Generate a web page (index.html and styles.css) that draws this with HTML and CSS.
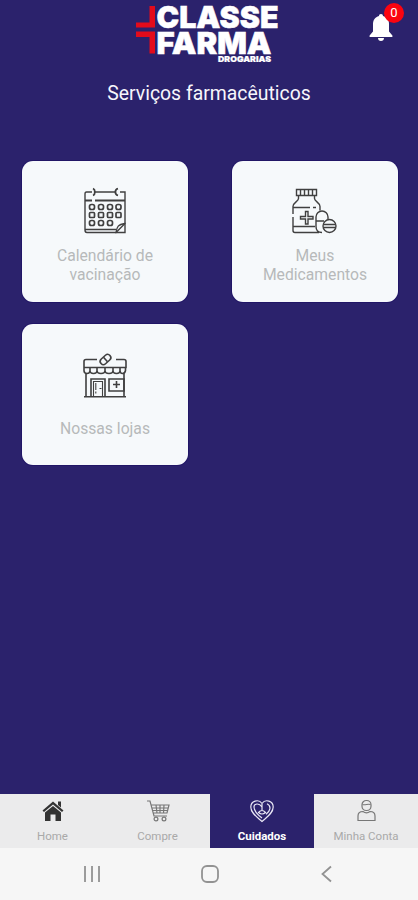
FILE: index.html
```html
<!DOCTYPE html>
<html lang="pt-BR">
<head>
<meta charset="utf-8">
<meta name="viewport" content="width=device-width, initial-scale=1">
<title>Classe Farma</title>
<link rel="stylesheet" href="styles.css">
</head>
<body>
<div class="app">
  <header class="header">
    <svg class="logo" viewBox="0 0 146 66" role="img">
      <path class="logo-cross" d="M13.500 6h5.500v21.500H0v-5h13.500zM0 31.500h19v22h-5.500v-16.500H0z"/>
      <g class="logo-name">
        <text x="20.500" y="28.200" font-size="30" textLength="122" lengthAdjust="spacingAndGlyphs">CLASSE</text>
        <text x="20.500" y="53.500" font-size="29.500" textLength="115" lengthAdjust="spacingAndGlyphs">FARMA</text>
        <text class="logo-sub" x="82" y="61.700" font-size="8.200" textLength="53" lengthAdjust="spacingAndGlyphs">DROGARIAS</text>
      </g>
    </svg>
    <div class="bell">
      <svg width="24" height="28" viewBox="0 0 24 28"><path d="M12 0c-1.300 0-2 .8-2 2-4 1-6 4.200-6 8v7.500L.6 21.500V23h22.800v-1.500L20 17.500V10c0-3.800-2-7-6-8 0-1.200-.7-2-2-2zM9 24h6c0 1.800-1.200 3-3 3s-3-1.200-3-3z"/></svg>
      <span class="badge">0</span>
    </div>
  </header>
  <h1 class="title">Serviços farmacêuticos</h1>
  <main class="cards">
    <a class="card">
      <svg class="card-icon" viewBox="0 0 48 48">
        <path d="M11 6H5.500Q4 6 4 8v36q0 2.500 2 2.500h29l9-9V6h-5M14 6h20M4 43.500h31"/>
        <path class="bold" d="M4 14.500h7m3 0h30M12 9.500c2.500-1 2.500-6 0-7M37 9.500c-3.500-1-3.500-6 0-7"/>
        <path d="M35 46.500c1-6 2-8 9-9v9z"/>
        <g class="dates">
          <rect x="8.500" y="18.500" width="5" height="5" rx="2"/><rect x="17.500" y="18.500" width="5" height="5" rx="2"/><rect x="26.500" y="18.500" width="5" height="5" rx="2"/><rect x="35" y="18.500" width="5" height="5" rx="2"/>
          <rect x="8.500" y="26.500" width="5" height="5" rx="1"/><rect x="17.500" y="26.500" width="5" height="5" rx="1"/><rect x="26.500" y="26.500" width="5" height="5" rx="1"/><rect x="35" y="26.500" width="5" height="5" rx="1"/>
          <rect x="8.500" y="34.500" width="5" height="5" rx="2"/><rect x="17.500" y="34.500" width="5" height="5" rx="2"/><rect x="26.500" y="34.500" width="5" height="5" rx="2"/>
        </g>
      </svg>
      <span class="card-label">Calendário de<br>vacinação</span>
    </a>
    <a class="card">
      <svg class="card-icon" viewBox="0 0 48 48">
        <path d="M5.500 3.500h20v6h-20zM9.500 4v5M13.500 4v5M17.500 4v5M21.500 4v5M7.500 9.500v3c0 3-5.500 4-5.500 8V28m0 3v13.500q0 2 2 2h24M23.500 9.500v3c0 3 5.500 4 5.500 8v4M2 21.500h17m3 0h3M2 40.500h22"/>
        <path d="M14.500 25.500h2.500v5h5v2.500h-5v5h-2.500v-5h-5v-2.500h5z"/>
        <path d="M31 46.500c-4 0-6-2-6-6V31a6 6 0 0 1 12 0v2.500M25 35h8"/>
        <circle cx="38.500" cy="40" r="6.500"/>
        <path d="M32.500 38.500h12M32.500 41.500h12"/>
      </svg>
      <span class="card-label">Meus<br>Medicamentos</span>
    </a>
    <a class="card">
      <svg class="card-icon store" viewBox="0 0 48 48">
        <path d="M16 8.500H5Q3 8.500 3 10.500v6h42v-6q0-2-2-2h-8M3 16.500v3q0 3 3 3t3-3v-3 3q0 3 3.500 3t3.500-3v-3 3q0 3 4 3t4-3v-3 3q0 3 4 3t4-3v-3 3q0 3 3.500 3t3.500-3v-3 3q0 3 2.500 3t3-3v-3M5 22.500v23M43 22.500v23M3 45.800h42"/>
        <path d="M10 45V28h14v17M28 28h15v12H28zM35.500 30v7M32 33.500h7"/>
        <path class="thin" d="M12.500 45V30.500h9V45M14.800 32v7m0 1.500v2M18.500 37.500h2"/>
        <g transform="rotate(-42 24.500 8.500)"><rect x="18.500" y="5.300" width="12" height="6.400" rx="3.200"/><path d="M24.500 5.500v6"/></g>
      </svg>
      <span class="card-label">Nossas lojas</span>
    </a>
  </main>
  <nav class="tabs">
    <a class="tab">
      <svg class="tab-icon home" viewBox="0 0 24 24"><path d="M1.500 11.500L12 2.500l10.500 9-1.500 1.500L12 5.500 3 13zM17 2.500h3v6l-3-2.500zM4 13.500L12 7l8 6.500V22h-5.500v-6.500h-5V22H4z"/></svg>
      <span>Home</span>
    </a>
    <a class="tab">
      <svg class="tab-icon cart" viewBox="0 0 24 24"><path d="M1 2h3l4 15h13M5.500 6H23l-2 8H7.500M6 9h16M7 11.500h14.500M10 6l1 8M14 6v8M18 6l-.5 8"/><circle cx="10" cy="20" r="1.900"/><circle cx="18" cy="20" r="1.900"/></svg>
      <span>Compre</span>
    </a>
    <a class="tab active">
      <svg class="tab-icon heart" viewBox="0 0 24 24"><path d="M12 22.500C7 18 .8 14 .8 8 .8 2 8.500-.5 12 4.500 15.500-.5 23.200 2 23.200 8c0 6-6.200 10-11.200 14.500z"/><path d="M12 19C8 16 4 12.500 4 8c0-3.500 5-4.500 8 0M17 4.800c5 2.500 3 7.500-1 10.500M12 5v6M8.500 13.500q3.500-4 7 0-3.500 3-7 0z"/></svg>
      <span>Cuidados</span>
    </a>
    <a class="tab">
      <svg class="tab-icon user" viewBox="0 0 24 24"><rect x="8" y="1.500" width="9" height="10" rx="4.300"/><path d="M8.500 5.500c3 1 5-1 8 0M4 21.500V17c0-3 2-4.500 5-4.500 2 1.500 5 1.500 7 0 3 0 5 1.500 5 4.500v4.500z"/></svg>
      <span>Minha Conta</span>
    </a>
  </nav>
  <footer class="system">
    <svg width="18" height="18" viewBox="0 0 18 18"><path d="M2 1v16M9 1v16M16 1v16"/></svg>
    <svg width="18" height="18" viewBox="0 0 18 18"><rect x="1" y="1" width="16" height="16" rx="5"/></svg>
    <svg width="18" height="18" viewBox="0 0 18 18"><path d="M13 1.500L4.500 9l8.500 7.500"/></svg>
  </footer>
</div>
</body>
</html>
```
FILE: styles.css
```css
* { box-sizing: border-box; }
body {
  margin: 0;
  font-family: Roboto, "Liberation Sans", sans-serif;
  background: #2b226c;
}
svg { display: block; }
.app {
  display: flex;
  flex-direction: column;
  height: 900px;
}
.header {
  display: flex;
  justify-content: space-between;
  height: 74px;
  padding: 0 25px 0 136px;
}
.logo { width: 146px; height: 66px; }
.logo-cross { fill: #e30b1b; }
.logo-name {
  fill: #fff;
  font-family: Inter, "Open Sans", sans-serif;
  font-weight: 900;
}
.logo-name text { stroke: #fff; stroke-width: .5px; }
.logo-name .logo-sub { stroke-width: .2px; }
.bell {
  position: relative;
  width: 24px;
  height: 28px;
  margin-top: 14px;
  fill: #fff;
}
.badge {
  position: absolute;
  top: -11px;
  left: 15px;
  width: 20px;
  height: 20px;
  border-radius: 50%;
  background: #fb0410;
  color: #fff;
  font-size: 13px;
  line-height: 20px;
  text-align: center;
}
.title {
  margin: 6px 0 0;
  height: 81px;
  color: #f7f6fc;
  font-size: 19.400px;
  font-weight: 400;
  line-height: 28px;
  text-align: center;
}
.cards {
  flex: 1;
  display: grid;
  grid-template-columns: 166px 166px;
  grid-auto-rows: 141px;
  align-content: start;
  gap: 22px 44px;
  padding: 0 0 0 22px;
}
.card {
  display: flex;
  flex-direction: column;
  align-items: center;
  padding-top: 25px;
  border-radius: 11px;
  background: #f6f9fb;
  box-shadow: 0 0 0 1px #211666;
}
.card-icon {
  width: 48px;
  height: 48px;
  fill: none;
  stroke: #404040;
  stroke-width: 1.400;
}
.card-icon.store { margin: 2px 0 -2px; stroke-width: 1.600; }
.card-icon .dates { stroke-width: 1.700; }
.card-icon .bold { stroke-width: 1.800; }
.card-icon .thin { stroke-width: 1.100; }
.card-label {
  display: flex;
  align-items: center;
  height: 38px;
  margin-top: 12px;
  color: #b7b9ba;
  font-size: 15.700px;
  line-height: 19px;
  text-align: center;
}
.tabs {
  display: grid;
  grid-template-columns: 105px 105px 104px 104px;
  height: 54px;
  background: #ebebec;
}
.tab {
  display: flex;
  flex-direction: column;
  align-items: center;
  padding-top: 5px;
  color: #a9a9a9;
  font-size: 11.500px;
  line-height: 14px;
}
.tab span { margin-top: 6px; }
.tab.active {
  background: #2b226c;
  color: #fff;
  font-weight: 700;
  font-size: 11.500px;
}
.tab-icon {
  width: 24px;
  height: 24px;
  fill: none;
  stroke: #777;
  stroke-width: 1.200;
}
.tab-icon.home { fill: #333; stroke: none; }
.tab-icon.heart { stroke: #e9e7f5; }
.system {
  display: flex;
  align-items: center;
  justify-content: space-between;
  height: 52px;
  padding: 0 82px 0 83px;
  background: #f6f6f6;
}
.system svg { fill: none; stroke: #929292; stroke-width: 1.800; }
```
